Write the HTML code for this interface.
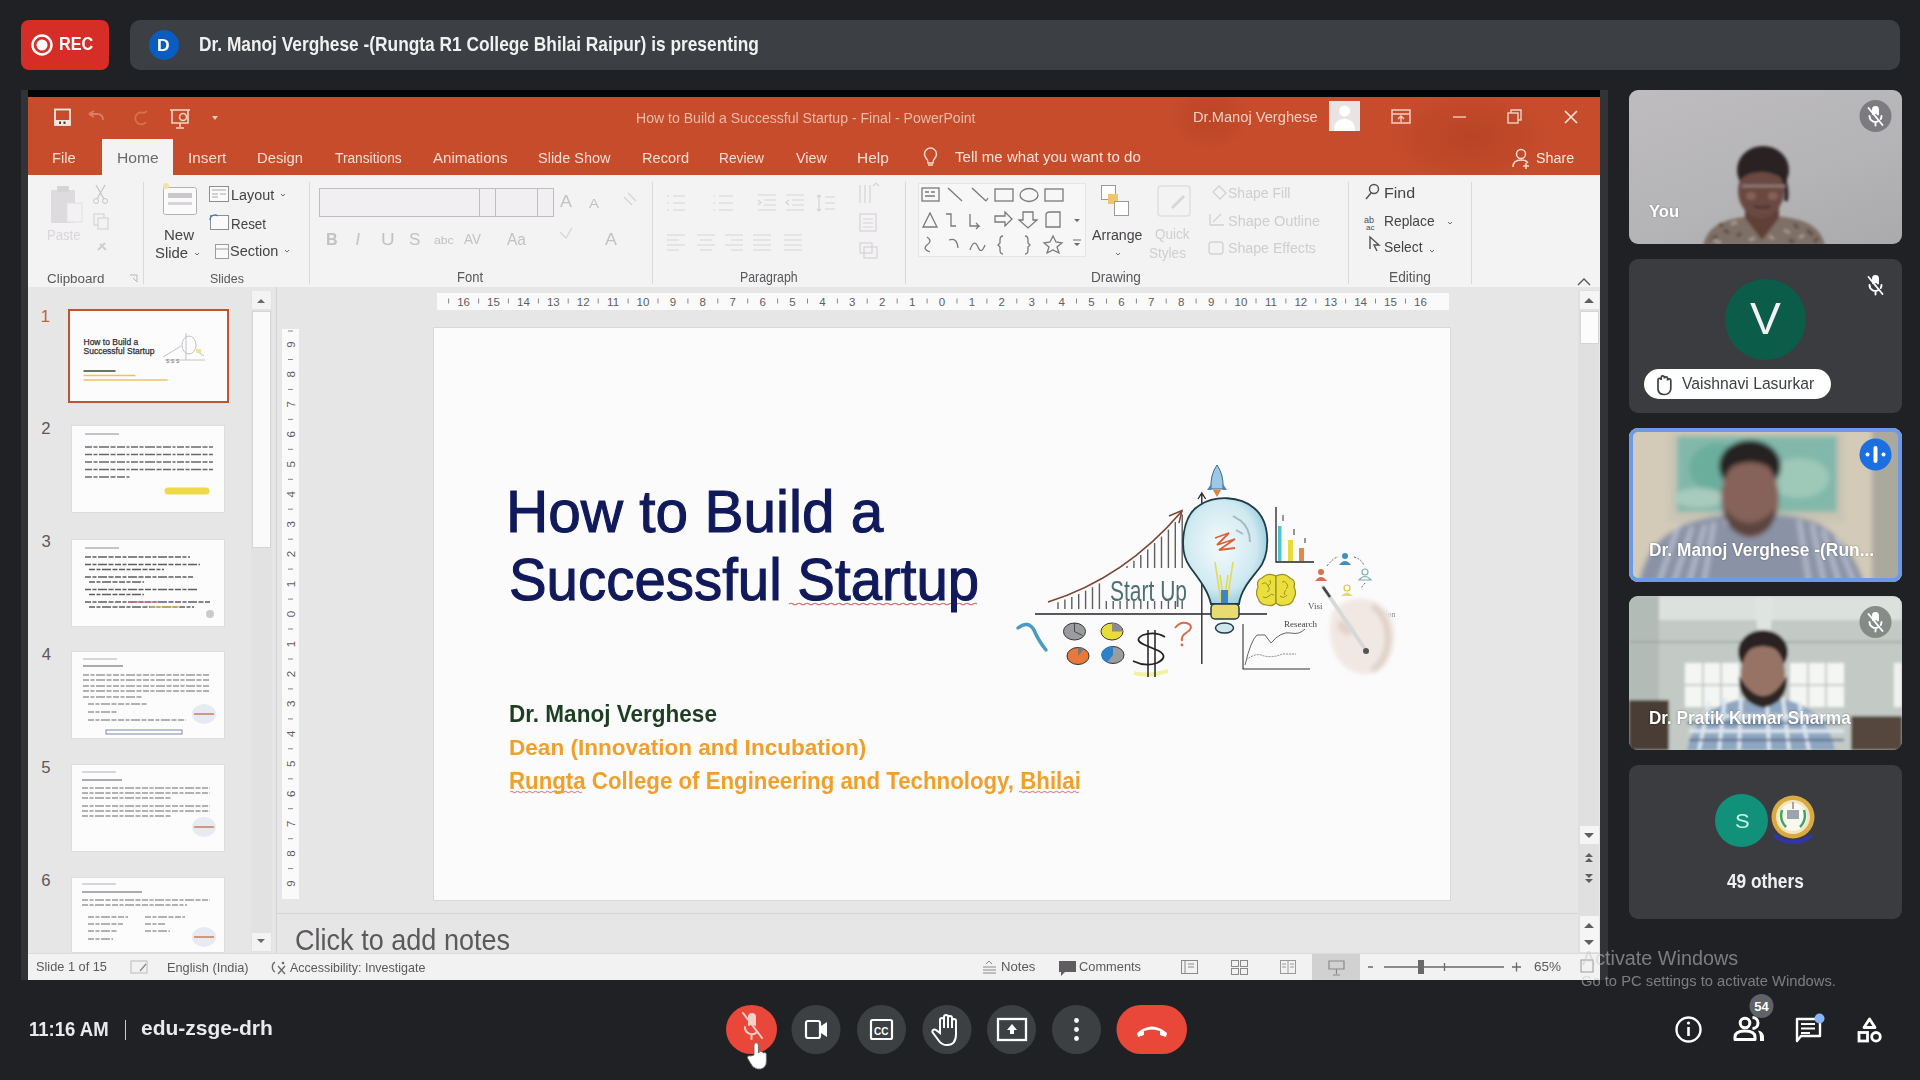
<!DOCTYPE html>
<html><head><meta charset="utf-8"><title>Meet</title>
<style>
*{box-sizing:border-box}
html,body{margin:0;padding:0}
body{width:1920px;height:1080px;overflow:hidden;background:#202124;position:relative;font-family:"Liberation Sans",sans-serif}
.a{position:absolute}
.t{position:absolute;white-space:nowrap;line-height:1;transform-origin:0 0}
svg{position:absolute;overflow:visible}
</style></head><body>
<div class="a" style="left:21px;top:20px;width:88px;height:50px;border-radius:8px;background:#d62d27"></div>
<svg style="left:0;top:0" width="1920" height="1080"><circle cx="42" cy="45" r="9.5" fill="none" stroke="#fff" stroke-width="2.4"/><circle cx="42" cy="45" r="5.5" fill="#fff"/></svg>
<div class="a" style="left:130px;top:20px;width:1770px;height:50px;border-radius:10px;background:#3c3f43"></div>
<div class="a" style="left:149px;top:30px;width:30px;height:30px;border-radius:50%;background:#0b5cc0"></div>
<div class="a" style="left:21px;top:90px;width:1587px;height:890px;background:#323337"></div>
<div class="a" style="left:28px;top:90px;width:1572px;height:7px;background:#050505"></div>
<div class="a" style="left:28px;top:97px;width:1572px;height:78px;background:#c64c2c"></div>
<div class="a" style="left:1140px;top:97px;width:460px;height:78px;background:radial-gradient(ellipse 120px 70px at 330px 40px, rgba(120,30,10,0.18), rgba(0,0,0,0) 70%), radial-gradient(ellipse 60px 50px at 70px 20px, rgba(120,30,10,0.15), rgba(0,0,0,0) 70%)"></div>
<div class="a" style="left:102px;top:139px;width:71px;height:37px;background:#f4f3f4"></div>
<div class="a" style="left:28px;top:175px;width:1572px;height:112px;background:#f4f3f4"></div>
<div class="a" style="left:28px;top:287px;width:1572px;height:666px;background:#e7e6e7"></div>
<div class="a" style="left:28px;top:953px;width:1572px;height:27px;background:#f3f2f3;border-top:1px solid #dcdbdc"></div>
<div class="a" style="left:1329px;top:101px;width:31px;height:30px;background:#e9e4e3"></div>
<svg style="left:0;top:0" width="1920" height="1080"><circle cx="1344.5" cy="111" r="5.5" fill="#fff"/><path d="M1334 131 Q1334 119 1344.5 119 Q1355 119 1355 131 Z" fill="#fff"/><rect x="55" y="109.5" width="15" height="15.5" fill="none" stroke="#f7e6df" stroke-width="1.8"/><rect x="55" y="120" width="15" height="5" fill="#f7e6df"/><rect x="59" y="121.5" width="2" height="2.5" fill="#5a3a30"/><rect x="63.5" y="121.5" width="2" height="2.5" fill="#5a3a30"/><path d="M89 114 l5 -3 M89 114 l5 3 M89 114 h8 q6 0 6 6" fill="none" stroke="#d9805f" stroke-width="1.8"/><path d="M146 122 a6 6 0 1 1 -2 -9 l3 -2" fill="none" stroke="#d4734f" stroke-width="1.8"/><path d="M170 110 h20 M172 110 v13 h16 v-13 M180 123 v4 M176 128 h8" fill="none" stroke="#f3d6c9" stroke-width="1.6"/><circle cx="183" cy="117" r="3.5" fill="none" stroke="#f3d6c9" stroke-width="1.5"/><path d="M212 116 h6 l-3 4 z" fill="#f0c7b6"/><rect x="1392" y="110" width="18" height="13" fill="none" stroke="#f4d0c2" stroke-width="1.5"/><path d="M1392 114 h18 M1401 116 v6 M1398 119 l3 -3 l3 3" fill="none" stroke="#f4d0c2" stroke-width="1.3"/><path d="M1453 117 h13" stroke="#f2c3b0" stroke-width="1.5"/><rect x="1508" y="113" width="10" height="10" fill="none" stroke="#f4d0c2" stroke-width="1.4"/><path d="M1511 113 v-3 h10 v10 h-3" fill="none" stroke="#f4d0c2" stroke-width="1.4"/><path d="M1565 111 l12 12 M1577 111 l-12 12" stroke="#f8e2d8" stroke-width="1.7"/><path d="M926 158 a6 6 0 1 1 9 0 q-2 2 -2 5 h-5 q0 -3 -2 -5 z M928 165 h5" fill="none" stroke="#f6dbcf" stroke-width="1.5"/><circle cx="1521" cy="154" r="4.5" fill="none" stroke="#f6dbcf" stroke-width="1.5"/><path d="M1513 167 q0 -7 8 -7 q5 0 7 3 M1526 163 v6 M1523 166 h6" fill="none" stroke="#f6dbcf" stroke-width="1.5"/></svg>
<svg style="left:0;top:0" width="1920" height="1080"><path d="M143.5 182 V284 M309.5 182 V284 M652.5 182 V284 M905.5 182 V284 M1348.5 182 V284 M1471.5 182 V284" stroke="#dad8da" stroke-width="1"/><rect x="51" y="190" width="24" height="33" rx="1" fill="#dddbdd"/><rect x="57" y="186" width="12" height="6" rx="1" fill="#d5d3d5"/><rect x="67" y="203" width="15" height="19" fill="#f3f1f3" stroke="#e2e0e2"/><path d="M96 185 l8 14 M105 185 l-8 14" stroke="#c8c6c8" stroke-width="1.3"/><circle cx="96" cy="201" r="2.5" fill="none" stroke="#c8c6c8"/><circle cx="105" cy="201" r="2.5" fill="none" stroke="#c8c6c8"/><rect x="94" y="214" width="10" height="11" fill="none" stroke="#cfcdcf"/><rect x="98" y="218" width="10" height="11" fill="#f4f3f4" stroke="#cfcdcf"/><path d="M98 250 l7 -7 M100 244 l6 6" stroke="#cfcdcf" stroke-width="2"/><path d="M130 275 h7 v7 M133 278 l4 4" fill="none" stroke="#b9b7b9" stroke-width="1"/><rect x="163.5" y="187.5" width="33" height="27" rx="2" fill="#fbfafb" stroke="#b3b1b3"/><rect x="168" y="193" width="24" height="5" fill="#c9c7c9"/><rect x="168" y="202" width="24" height="3" fill="#d7d5d7"/><circle cx="166" cy="186" r="3" fill="#f3e3a0"/><rect x="209.5" y="186.5" width="19" height="15" fill="#fbfafb" stroke="#8f8d8f"/><path d="M212 190 h14 M212 194 h6 M220 194 h6 M212 197 h6" stroke="#a9a7a9"/><rect x="210.5" y="215.5" width="18" height="14" fill="#fbfafb" stroke="#8f8d8f"/><path d="M210 220 a5 5 0 0 1 8 -4" fill="none" stroke="#4a79b8" stroke-width="1.3"/><rect x="215.5" y="244.5" width="13" height="14" fill="#fbfafb" stroke="#9d9b9d"/><path d="M215 249 h14" stroke="#9d9b9d"/><path d="M281 194 l2 2 l2 -2 M285 250 l2 2 l2 -2 M195 253 l2 2 l2 -2" fill="none" stroke="#6f6d6f" stroke-width="1"/><rect x="319.5" y="188.5" width="234" height="28" fill="#f1eff1" stroke="#bfbdbf"/><path d="M479.5 189 V216 M495.5 189 V216 M537.5 189 V216" stroke="#bfbdbf"/></svg>
<svg style="left:0;top:0" width="1920" height="1080"><g stroke="#d5d3d5" stroke-width="1.2" fill="none"><path d="M667 196 h2 M673 196 h12 M667 203 h2 M673 203 h12 M667 210 h2 M673 210 h12"/><path d="M713 196 h2 M719 196 h14 M713 203 h2 M719 203 h14 M713 210 h2 M719 210 h14"/><path d="M758 195 h18 M764 200 h12 M764 205 h12 M758 210 h18 M758 200 l3 2.5 l-3 2.5"/><path d="M786 195 h18 M792 200 h12 M792 205 h12 M786 210 h18 M789 200 l-3 2.5 l3 2.5"/><path d="M819 195 v16 M817 197 l2 -2 l2 2 M817 209 l2 2 l2 -2 M825 197 h10 M825 203 h10 M825 209 h10"/><path d="M860 185 v18 M865 185 v18 M870 185 v18 M873 186 l3 -3 l3 3"/><rect x="860" y="214" width="16" height="17"/><path d="M863 219 h10 M863 223 h10 M863 227 h10"/><rect x="860" y="243" width="12" height="10"/><rect x="864" y="247" width="13" height="11"/><path d="M667 235 h18 M667 240 h12 M667 245 h18 M667 250 h12"/><path d="M697 235 h18 M700 240 h12 M697 245 h18 M700 250 h12"/><path d="M725 235 h18 M731 240 h12 M725 245 h18 M731 250 h12"/><path d="M753 235 h18 M753 240 h18 M753 245 h18 M753 250 h18"/><path d="M784 235 h18 M784 240 h18 M784 245 h18 M784 250 h18"/><path d="M624 197 l8 8 M628 193 l8 8" /><path d="M560 232 l6 6 l6 -10" /></g><rect x="918.5" y="183.5" width="167" height="73" fill="#f8f7f8" stroke="#e6e4e6"/><g stroke="#7b797b" stroke-width="1.3" fill="none"><rect x="922" y="188" width="17" height="13"/><path d="M925 192 h4 M925 196 h10 M931 192 h4"/><path d="M948 188 l14 13 M972 188 l14 13 M986 201 l2 -3"/><rect x="995" y="189" width="18" height="12"/><ellipse cx="1029" cy="195" rx="9" ry="6.5"/><rect x="1045" y="189" width="18" height="12"/><path d="M923 227 l7 -14 l7 14 z M946 214 h5 v12 h5 M970 214 v12 h9 l-3 -3 M979 226 l-3 3"/><path d="M995 216 h10 v-4 l7 7 l-7 7 v-4 h-10 z M1023 212 h10 v8 h4 l-9 8 l-9 -8 h4 z M1046 227 v-12 q0 -3 4 -3 h10 v15 z"/><path d="M927 237 q6 4 0 8 q-5 4 3 7 M949 240 q8 -3 9 8 M970 250 q4 -12 8 -3 q3 8 7 -2 M1003 236 q-3 0 -3 4 v3 l-2 2 l2 2 v3 q0 4 3 4 M1025 236 q3 0 3 4 v3 l2 2 l-2 2 v3 q0 4 -3 4 M1053 236 l3 6 l6 1 l-5 4 l2 6 l-6 -3 l-6 3 l2 -6 l-5 -4 l6 -1 z"/></g><path d="M1074 219 h6 l-3 3 z M1074 243 h6 l-3 3 z" fill="#6d6b6d"/><path d="M1073 240 h8" stroke="#6d6b6d"/><rect x="1101.5" y="185.5" width="14" height="14" fill="#fff" stroke="#9b999b"/><rect x="1108" y="194" width="10" height="10" fill="#efc76a"/><rect x="1114.5" y="201.5" width="14" height="14" fill="#fff" stroke="#9b999b"/><path d="M1116 253 l2 2 l2 -2" fill="none" stroke="#6f6d6f"/><rect x="1158" y="186" width="32" height="30" rx="3" fill="none" stroke="#e0dee0" stroke-width="1.5"/><path d="M1172 208 l12 -12" stroke="#d8d6d8" stroke-width="3"/><g fill="none" stroke="#d3d1d3" stroke-width="1.3"><path d="M1213 192 l6 -6 l7 7 l-6 6 z"/><path d="M1210 225 h14 M1210 214 v11 M1213 222 l8 -8"/><rect x="1209" y="242" width="14" height="12" rx="3"/></g><g fill="none" stroke="#525052" stroke-width="1.4"><circle cx="1374" cy="189" r="4.5"/><path d="M1371 193 l-5 6"/><path d="M1370 249 l0 -12 l9 8 l-5 0 l3 6" /></g><text x="1364" y="223" font-family="Liberation Sans" font-size="9" fill="#525052">ab</text><text x="1366" y="230" font-family="Liberation Sans" font-size="8" fill="#525052">ac</text><path d="M1448 222 l2 2 l2 -2 M1430 250 l2 2 l2 -2" fill="none" stroke="#6f6d6f"/><path d="M1578 285 l6 -6 l6 6" fill="none" stroke="#555355" stroke-width="1.3"/></svg>
<div class="a" style="left:251px;top:291px;width:21px;height:661px;background:#e3e2e3"></div>
<div class="a" style="left:252px;top:291px;width:19px;height:18px;background:#f4f3f4"></div>
<div class="a" style="left:252px;top:311px;width:19px;height:237px;background:#fbfafb;border:1px solid #d6d5d6"></div>
<div class="a" style="left:252px;top:933px;width:19px;height:18px;background:#f4f3f4"></div>
<div class="a" style="left:276px;top:287px;width:1px;height:666px;background:#d4d3d4"></div>
<svg style="left:0;top:0" width="1920" height="1080"><path d="M257 303 l4 -4 l4 4 z M257 939 l4 4 l4 -4 z" fill="#6a686a"/></svg>
<div class="a" style="left:72px;top:426px;width:152px;height:86px;background:#fdfcfd;box-shadow:0 0 0 1px #dedcde"></div>
<div class="a" style="left:72px;top:540px;width:152px;height:86px;background:#fdfcfd;box-shadow:0 0 0 1px #dedcde"></div>
<div class="a" style="left:72px;top:652px;width:152px;height:86px;background:#fdfcfd;box-shadow:0 0 0 1px #dedcde"></div>
<div class="a" style="left:72px;top:765px;width:152px;height:86px;background:#fdfcfd;box-shadow:0 0 0 1px #dedcde"></div>
<div class="a" style="left:72px;top:878px;width:152px;height:74px;background:#fdfcfd;box-shadow:0 0 0 1px #dedcde"></div>
<div class="a" style="left:68px;top:309px;width:161px;height:94px;border:2.5px solid #bf5430;background:#fdfcfd"></div>
<svg style="left:0;top:0" width="1920" height="1080"><text x="83.5" y="345" font-family="Liberation Sans" font-size="8.5" fill="#2e2e32" stroke="#2e2e32" stroke-width="0.25">How to Build a</text><text x="83.5" y="354" font-family="Liberation Sans" font-size="8.5" fill="#2e2e32" stroke="#2e2e32" stroke-width="0.25">Successful Startup</text><path d="M83.5 371 h32" stroke="#1d3a1d" stroke-width="1.6" opacity="0.9"/><path d="M83.5 375.5 h52 M83.5 380 h84" stroke="#f0b040" stroke-width="1.3" opacity="0.8"/><g fill="none" stroke="#a8acb4" stroke-width="0.9" opacity="0.8"><path d="M163 357 l10 -6 l8 -5 M186 333 v27"/><ellipse cx="189" cy="345" rx="7" ry="9"/><path d="M198 352 l6 4 M165 360 h40"/></g><text x="166" y="363" font-family="Liberation Sans" font-size="6" fill="#8a8a8a">$ $ $</text><rect x="196" y="349" width="5" height="4" fill="#e8e080" opacity="0.8"/><path d="M85 434 h34" stroke="#b0b0b8" stroke-width="1.4"/><g stroke="#3a3a3a" stroke-width="1.6" stroke-dasharray="7 1.5 4 1.5 10 1.5 5 1.5 8 1.5 3 1.5" opacity="0.75"><path d="M85 447 h128 M85 454.5 h128 M85 462 h128 M85 469.5 h128 M85 477 h45"/></g><path d="M168 491 h38" stroke="#efd84a" stroke-width="7" stroke-linecap="round"/><path d="M85 548 h34" stroke="#b0b0b8" stroke-width="1.4"/><g stroke="#2a2a2a" stroke-width="1.4" stroke-dasharray="6 1.5 4 1.5 9 1.5 5 1.5" opacity="0.75"><path d="M85 557 h105 M85 564.5 h115 M89 569.5 h75 M85 577 h108 M89 582 h55 M85 589.5 h112 M89 594.5 h55 M85 602 h125 M89 607 h105"/></g><path d="M128 602 h30" stroke="#d86a8a" stroke-width="1.1"/><path d="M150 607 h30" stroke="#e8c050" stroke-width="1.1"/><circle cx="210" cy="614" r="4" fill="#c8ccd2"/><path d="M83 659 h34" stroke="#b0b0b8" stroke-width="1.2"/><path d="M83 666 h40" stroke="#5a5a5a" stroke-width="1.2"/><g stroke="#2a2a2a" stroke-width="1.2" stroke-dasharray="6 1.5 4 1.5 9 1.5 5 1.5" opacity="0.7"><path d="M83 675 h126 M83 680 h126 M83 686 h126 M83 691 h126 M83 697 h60 M88 704 h60 M88 712 h30 M88 720 h98"/></g><rect x="106" y="730" width="76" height="4" fill="none" stroke="#7a88a8" stroke-width="1"/><g opacity="0.8"><ellipse cx="204" cy="714" rx="12" ry="10" fill="#e2e6ee"/><path d="M194 714 h20" stroke="#c88060" stroke-width="2"/></g><path d="M82 772 h34" stroke="#b0b0b8" stroke-width="1.2"/><path d="M82 780 h40" stroke="#5a5a5a" stroke-width="1.2"/><g stroke="#2a2a2a" stroke-width="1.2" stroke-dasharray="6 1.5 4 1.5 9 1.5 5 1.5" opacity="0.7"><path d="M82 788 h128 M82 793 h128 M82 798 h90 M82 806 h128 M82 811 h128 M82 816 h90"/></g><g opacity="0.8"><ellipse cx="204" cy="827" rx="12" ry="10" fill="#e2e6ee"/><path d="M194 827 h20" stroke="#c88060" stroke-width="2"/></g><path d="M82 884 h34" stroke="#b0b0b8" stroke-width="1.2"/><path d="M82 892 h60" stroke="#5a5a5a" stroke-width="1.2"/><g stroke="#2a2a2a" stroke-width="1.2" stroke-dasharray="6 1.5 4 1.5 9 1.5 5 1.5" opacity="0.7"><path d="M82 900 h128 M82 905 h105 M88 917 h40 M145 917 h40 M88 924 h35 M145 924 h20 M88 931 h30 M145 931 h25 M88 939 h25"/></g><g opacity="0.8"><ellipse cx="204" cy="937" rx="12" ry="10" fill="#e2e6ee"/><path d="M194 937 h20" stroke="#c88060" stroke-width="2"/></g></svg>
<div class="a" style="left:437px;top:293px;width:1012px;height:17px;background:#fbfafb"></div>
<div class="a" style="left:282px;top:329px;width:17px;height:570px;background:#fbfafb"></div>
<svg style="left:0;top:0" width="1920" height="1080"><g font-family="Liberation Sans" font-size="11.5" fill="#5f5d5f" text-anchor="middle"><text x="463.6" y="305.6">16</text><path d="M478.6 298.5 v5" stroke="#8a888a" stroke-width="1"/><text x="493.5" y="305.6">15</text><path d="M508.4 298.5 v5" stroke="#8a888a" stroke-width="1"/><text x="523.4" y="305.6">14</text><path d="M538.4 298.5 v5" stroke="#8a888a" stroke-width="1"/><text x="553.3" y="305.6">13</text><path d="M568.2 298.5 v5" stroke="#8a888a" stroke-width="1"/><text x="583.2" y="305.6">12</text><path d="M598.2 298.5 v5" stroke="#8a888a" stroke-width="1"/><text x="613.1" y="305.6">11</text><path d="M628.1 298.5 v5" stroke="#8a888a" stroke-width="1"/><text x="643.0" y="305.6">10</text><path d="M658.0 298.5 v5" stroke="#8a888a" stroke-width="1"/><text x="672.9" y="305.6">9</text><path d="M687.9 298.5 v5" stroke="#8a888a" stroke-width="1"/><text x="702.8" y="305.6">8</text><path d="M717.8 298.5 v5" stroke="#8a888a" stroke-width="1"/><text x="732.7" y="305.6">7</text><path d="M747.7 298.5 v5" stroke="#8a888a" stroke-width="1"/><text x="762.6" y="305.6">6</text><path d="M777.6 298.5 v5" stroke="#8a888a" stroke-width="1"/><text x="792.5" y="305.6">5</text><path d="M807.5 298.5 v5" stroke="#8a888a" stroke-width="1"/><text x="822.4" y="305.6">4</text><path d="M837.4 298.5 v5" stroke="#8a888a" stroke-width="1"/><text x="852.3" y="305.6">3</text><path d="M867.2 298.5 v5" stroke="#8a888a" stroke-width="1"/><text x="882.2" y="305.6">2</text><path d="M897.2 298.5 v5" stroke="#8a888a" stroke-width="1"/><text x="912.1" y="305.6">1</text><path d="M927.1 298.5 v5" stroke="#8a888a" stroke-width="1"/><text x="942.0" y="305.6">0</text><path d="M957.0 298.5 v5" stroke="#8a888a" stroke-width="1"/><text x="971.9" y="305.6">1</text><path d="M986.9 298.5 v5" stroke="#8a888a" stroke-width="1"/><text x="1001.8" y="305.6">2</text><path d="M1016.8 298.5 v5" stroke="#8a888a" stroke-width="1"/><text x="1031.7" y="305.6">3</text><path d="M1046.7 298.5 v5" stroke="#8a888a" stroke-width="1"/><text x="1061.6" y="305.6">4</text><path d="M1076.5 298.5 v5" stroke="#8a888a" stroke-width="1"/><text x="1091.5" y="305.6">5</text><path d="M1106.5 298.5 v5" stroke="#8a888a" stroke-width="1"/><text x="1121.4" y="305.6">6</text><path d="M1136.4 298.5 v5" stroke="#8a888a" stroke-width="1"/><text x="1151.3" y="305.6">7</text><path d="M1166.2 298.5 v5" stroke="#8a888a" stroke-width="1"/><text x="1181.2" y="305.6">8</text><path d="M1196.1 298.5 v5" stroke="#8a888a" stroke-width="1"/><text x="1211.1" y="305.6">9</text><path d="M1226.0 298.5 v5" stroke="#8a888a" stroke-width="1"/><text x="1241.0" y="305.6">10</text><path d="M1256.0 298.5 v5" stroke="#8a888a" stroke-width="1"/><text x="1270.9" y="305.6">11</text><path d="M1285.9 298.5 v5" stroke="#8a888a" stroke-width="1"/><text x="1300.8" y="305.6">12</text><path d="M1315.8 298.5 v5" stroke="#8a888a" stroke-width="1"/><text x="1330.7" y="305.6">13</text><path d="M1345.6 298.5 v5" stroke="#8a888a" stroke-width="1"/><text x="1360.6" y="305.6">14</text><path d="M1375.5 298.5 v5" stroke="#8a888a" stroke-width="1"/><text x="1390.5" y="305.6">15</text><path d="M1405.5 298.5 v5" stroke="#8a888a" stroke-width="1"/><text x="1420.4" y="305.6">16</text><path d="M448.6 298.5 v5" stroke="#8a888a" stroke-width="1"/><text x="0" y="0" transform="translate(294.5 344.5) rotate(-90)">9</text><path d="M288 359.5 h5" stroke="#8a888a" stroke-width="1"/><text x="0" y="0" transform="translate(294.5 374.4) rotate(-90)">8</text><path d="M288 389.4 h5" stroke="#8a888a" stroke-width="1"/><text x="0" y="0" transform="translate(294.5 404.4) rotate(-90)">7</text><path d="M288 419.4 h5" stroke="#8a888a" stroke-width="1"/><text x="0" y="0" transform="translate(294.5 434.4) rotate(-90)">6</text><path d="M288 449.3 h5" stroke="#8a888a" stroke-width="1"/><text x="0" y="0" transform="translate(294.5 464.3) rotate(-90)">5</text><path d="M288 479.3 h5" stroke="#8a888a" stroke-width="1"/><text x="0" y="0" transform="translate(294.5 494.2) rotate(-90)">4</text><path d="M288 509.2 h5" stroke="#8a888a" stroke-width="1"/><text x="0" y="0" transform="translate(294.5 524.2) rotate(-90)">3</text><path d="M288 539.2 h5" stroke="#8a888a" stroke-width="1"/><text x="0" y="0" transform="translate(294.5 554.1) rotate(-90)">2</text><path d="M288 569.1 h5" stroke="#8a888a" stroke-width="1"/><text x="0" y="0" transform="translate(294.5 584.1) rotate(-90)">1</text><path d="M288 599.1 h5" stroke="#8a888a" stroke-width="1"/><text x="0" y="0" transform="translate(294.5 614.0) rotate(-90)">0</text><path d="M288 629.0 h5" stroke="#8a888a" stroke-width="1"/><text x="0" y="0" transform="translate(294.5 644.0) rotate(-90)">1</text><path d="M288 659.0 h5" stroke="#8a888a" stroke-width="1"/><text x="0" y="0" transform="translate(294.5 674.0) rotate(-90)">2</text><path d="M288 688.9 h5" stroke="#8a888a" stroke-width="1"/><text x="0" y="0" transform="translate(294.5 703.9) rotate(-90)">3</text><path d="M288 718.9 h5" stroke="#8a888a" stroke-width="1"/><text x="0" y="0" transform="translate(294.5 733.8) rotate(-90)">4</text><path d="M288 748.8 h5" stroke="#8a888a" stroke-width="1"/><text x="0" y="0" transform="translate(294.5 763.8) rotate(-90)">5</text><path d="M288 778.8 h5" stroke="#8a888a" stroke-width="1"/><text x="0" y="0" transform="translate(294.5 793.8) rotate(-90)">6</text><path d="M288 808.7 h5" stroke="#8a888a" stroke-width="1"/><text x="0" y="0" transform="translate(294.5 823.7) rotate(-90)">7</text><path d="M288 838.7 h5" stroke="#8a888a" stroke-width="1"/><text x="0" y="0" transform="translate(294.5 853.6) rotate(-90)">8</text><path d="M288 868.6 h5" stroke="#8a888a" stroke-width="1"/><text x="0" y="0" transform="translate(294.5 883.6) rotate(-90)">9</text><path d="M288 331 h5" stroke="#8a888a" stroke-width="1"/></g></svg>
<div class="a" style="left:434px;top:328px;width:1016px;height:572px;background:#fcfbfc;box-shadow:0 0 0 1px #d9d8d9"></div>
<div class="a" style="left:1578px;top:290px;width:21px;height:663px;background:#e1e0e1"></div>
<div class="a" style="left:1580px;top:291px;width:19px;height:18px;background:#f6f5f6"></div>
<div class="a" style="left:1580px;top:311px;width:19px;height:33px;background:#fdfcfd;border:1px solid #d6d5d6"></div>
<div class="a" style="left:1580px;top:826px;width:19px;height:18px;background:#f6f5f6"></div>
<div class="a" style="left:1580px;top:916px;width:19px;height:36px;background:#f6f5f6"></div>
<div class="a" style="left:277px;top:913px;width:1301px;height:1px;background:#d6d5d6"></div>
<svg style="left:0;top:0" width="1920" height="1080"><g fill="#5f5d5f"><path d="M1584 303 l5 -5 l5 5 z M1584 833 l5 5 l5 -5 z M1584 928 l5 -5 l5 5 z M1584 940 l5 5 l5 -5 z"/><path d="M1585 857 l4 -4 l4 4 z M1585 862 l4 -4 l4 4 z M1585 874 l4 4 l4 -4 z M1585 879 l4 4 l4 -4 z"/></g></svg>
<svg style="left:0;top:0" width="1920" height="1080"><path d="M789 604 q2 -1.5 4 0 t4 0 t4 0 t4 0 t4 0 t4 0 t4 0 t4 0 t4 0 t4 0 t4 0 t4 0 t4 0 t4 0 t4 0 t4 0 t4 0 t4 0 t4 0 t4 0 t4 0 t4 0 t4 0 t4 0 t4 0 t4 0 t4 0 t4 0 t4 0 t4 0 t4 0 t4 0 t4 0 t4 0 t4 0 t4 0 t4 0 t4 0 t4 0 t4 0 t4 0 t4 0 t4 0 t4 0 t4 0 t4 0 t4 0" fill="none" stroke="#d46a6a" stroke-width="1.2"/><path d="M510 792 q1.5 -1.5 3 0 t3 0 t3 0 t3 0 t3 0 t3 0 t3 0 t3 0 t3 0 t3 0 t3 0 t3 0 t3 0 t3 0 t3 0 t3 0 t3 0 t3 0 t3 0 t3 0 t3 0 t3 0 t3 0 t3 0" fill="none" stroke="#d46a6a" stroke-width="1"/><path d="M1019 792 q1.5 -1.5 3 0 t3 0 t3 0 t3 0 t3 0 t3 0 t3 0 t3 0 t3 0 t3 0 t3 0 t3 0 t3 0 t3 0 t3 0 t3 0 t3 0 t3 0 t3 0 t3 0" fill="none" stroke="#d46a6a" stroke-width="1"/></svg>
<svg style="left:0;top:0" width="1920" height="1080"><defs><filter id="bl" x="-50%" y="-50%" width="200%" height="200%"><feGaussianBlur stdDeviation="4"/></filter><filter id="bl1" x="-20%" y="-20%" width="140%" height="140%"><feGaussianBlur stdDeviation="0.6"/></filter><radialGradient id="bulbg" cx="0.45" cy="0.45" r="0.6"><stop offset="0" stop-color="#f4fbfd"/><stop offset="0.7" stop-color="#cfe9f1"/><stop offset="1" stop-color="#8fc9dc"/></radialGradient></defs><g filter="url(#bl1)"><g stroke="#3f4246" stroke-width="1.4" opacity="0.85"><path d="M1058.0 602.2 V609" /><path d="M1064.9 599.6 V609" /><path d="M1071.8 596.9 V609" /><path d="M1078.7 593.9 V609" /><path d="M1085.6 590.6 V609" /><path d="M1092.5 587.2 V609" /><path d="M1099.4 583.4 V609" /><path d="M1106.3 601 V609" /><path d="M1113.2 601 V609" /><path d="M1120.1 601 V609" /><path d="M1127.0 601 V609" /><path d="M1127.0 565.9 V568" /><path d="M1133.9 601 V609" /><path d="M1133.9 560.7 V568" /><path d="M1140.8 601 V609" /><path d="M1140.8 555.1 V568" /><path d="M1147.7 601 V609" /><path d="M1147.7 549.5 V568" /><path d="M1154.6 601 V609" /><path d="M1154.6 543.0 V568" /><path d="M1161.5 601 V609" /><path d="M1161.5 536.6 V568" /><path d="M1168.4 601 V609" /><path d="M1168.4 529.7 V568" /><path d="M1175.3 601 V609" /><path d="M1175.3 522.1 V568" /><path d="M1182.2 601 V609" /><path d="M1182.2 514.5 V568" /></g><path d="M1035 614 H1267" stroke="#1f2326" stroke-width="1.6"/><path d="M1201.8 664 V493 M1198 499 l3.8 -6 l3.8 6" fill="none" stroke="#2a2d30" stroke-width="1.4"/><path d="M1048 602 Q1125 578 1182 511" fill="none" stroke="#7a4636" stroke-width="1.7"/><path d="M1169 516 L1182 510.5 L1179 523" fill="none" stroke="#7a4636" stroke-width="1.5"/><text x="0" y="0" font-family="Liberation Sans" font-size="30" fill="#3a6066" transform="translate(1110 601) scale(0.7 1)" opacity="0.9">Start Up</text><path d="M1211 604 C1208 590 1198 578 1190 567 C1178 550 1182 515 1200 505 C1215 495 1240 496 1254 508 C1272 523 1270 556 1258 570 C1250 580 1241 590 1239 604 Z" fill="url(#bulbg)" stroke="#1f3c48" stroke-width="1.8"/><path d="M1240 520 q10 8 10 22 M1233 516 l8 5 M1236 530 l7 4" fill="none" stroke="#a8b8bf" stroke-width="2"/><path d="M1215 538 l14 -5 l-12 12 l18 -6 l-16 11 l16 -2" fill="none" stroke="#d7643a" stroke-width="1.8"/><path d="M1215 562 l6 40 M1233 562 l-6 40 M1220 575 l4 27 M1228 575 l-4 27" fill="none" stroke="#e6d850" stroke-width="1.6"/><rect x="1221" y="590" width="7" height="14" fill="#3d86c4"/><rect x="1211" y="604" width="28" height="15" rx="4" fill="#e8dc70" stroke="#1f3c48" stroke-width="1.5"/><ellipse cx="1224.5" cy="628" rx="9" ry="5" fill="#cfe6ee" stroke="#1f3c48" stroke-width="1.5"/><path d="M1217 465 q-7 10 -6 24 h12 q1 -14 -6 -24 z" fill="#9cc8e6" stroke="#3c6a8e" stroke-width="1"/><path d="M1211 484 l-4 6 h4 M1223 484 l4 6 h-4" fill="#4c86b8"/><path d="M1213 490 l4 7 l4 -7 z" fill="#e2843a"/><path d="M1276 507 V562 H1314" fill="none" stroke="#222" stroke-width="1.3"/><rect x="1278" y="526" width="3.5" height="35" fill="#4fc3d0"/><rect x="1288" y="540" width="5" height="21" fill="#e8dc3a"/><rect x="1299" y="548" width="5" height="13" fill="#e08a4a"/><path d="M1283 521 v-6 M1294 535 v-6 M1305 543 v-5" stroke="#333" stroke-width="1"/><path d="M1276 576 q-8 -4 -14 2 q-6 2 -4 9 q-3 6 0 11 q2 7 9 7 q5 2 9 -2 z" fill="#eadf3c" stroke="#9a9028" stroke-width="1.2"/><path d="M1276 576 q8 -4 14 2 q6 2 4 9 q3 6 0 11 q-2 7 -9 7 q-5 2 -9 -2 z" fill="#eadf3c" stroke="#9a9028" stroke-width="1.2"/><path d="M1262 584 q4 -3 6 2 q3 4 -1 6 M1280 596 q4 3 7 -1 M1263 597 q3 2 6 -1 q2 -3 5 -1 M1282 582 q3 -2 5 2 q2 3 -1 5 M1270 580 q2 4 -2 6 M1286 590 q-3 2 -1 5" fill="none" stroke="#9a9428" stroke-width="1"/><g stroke-width="0"><circle cx="1345" cy="556" r="3" fill="#3f8fc0"/><path d="M1339 565 q6 -8 12 0 z" fill="#3f8fc0"/><circle cx="1321" cy="572" r="3" fill="#d8704e"/><path d="M1315 581 q6 -8 12 0 z" fill="#d8704e"/><circle cx="1365" cy="572" r="3" fill="none" stroke="#7fb0b8" stroke-width="1.2"/><path d="M1359 580 q6 -7 12 0 z" fill="none" stroke="#7fb0b8" stroke-width="1.2"/><circle cx="1347" cy="588" r="3" fill="none" stroke="#d8c840" stroke-width="1.2"/><path d="M1341 596 q6 -7 12 0 z" fill="#e8dc60"/></g><path d="M1327 566 q6 -8 11 -9 M1354 557 q8 2 10 9 M1365 583 l-4 5" fill="none" stroke="#555" stroke-width="0.9" stroke-dasharray="2 1.5"/><path d="M1243 624 V669 H1310" fill="none" stroke="#333" stroke-width="1.1"/><path d="M1245 665 q6 -25 12 -30 h8 l6 8 q10 -12 20 -10 q8 2 14 -4" fill="none" stroke="#666" stroke-width="1"/><path d="M1246 660 q10 -8 18 -4 q10 2 18 -2 h14" fill="none" stroke="#777" stroke-width="0.9" stroke-dasharray="2 1"/><text x="1284" y="627" font-family="Liberation Serif" font-size="9" fill="#444">Research</text><text x="1308" y="609" font-family="Liberation Serif" font-size="9" fill="#555">Visi</text><text x="1383" y="617" font-family="Liberation Serif" font-size="8" fill="#888">tion</text><path d="M1018 628 q10 -8 16 2 q4 10 12 20" fill="none" stroke="#4a9cc0" stroke-width="3.5" stroke-linecap="round"/><ellipse cx="1074.5" cy="631.5" rx="11" ry="8.5" fill="#9a9ca0" stroke="#333" stroke-width="1"/><path d="M1074.5 631.5 v-8.5 M1074.5 631.5 l8 4" stroke="#333" stroke-width="0.8"/><ellipse cx="1112" cy="631.5" rx="11" ry="8.5" fill="#e8dc3a" stroke="#333" stroke-width="1"/><path d="M1112 631.5 v-8.5 a11 8.5 0 0 1 11 8.5 z" fill="#8a8c90"/><ellipse cx="1078" cy="656" rx="11" ry="8.5" fill="#e8783a" stroke="#333" stroke-width="1"/><path d="M1078 656 v-8.5 a11 8.5 0 0 1 6 1 z" fill="#777"/><ellipse cx="1113" cy="655" rx="11" ry="8.5" fill="#9a9ca0" stroke="#333" stroke-width="1"/><path d="M1113 655 v-8.5 a11 8.5 0 0 0 -6 16 z" fill="#2f80c8"/><path d="M1134 673 q14 4 34 -2" stroke="#eeee80" stroke-width="4" fill="none" opacity="0.7"/><path d="M1165 637 q-10 -6 -22 -2 q-10 5 2 10 l14 6 q10 6 -2 12 q-12 4 -24 -2" fill="none" stroke="#222" stroke-width="1.8"/><path d="M1148 630 V677 M1155 630 V677" stroke="#222" stroke-width="1.5"/><path d="M1175 628 q6 -8 14 -4 q5 4 -3 9 q-5 3 -4 8" fill="none" stroke="#d86a4a" stroke-width="2"/><circle cx="1182" cy="645" r="1.4" fill="#d86a4a"/></g><defs><filter id="bl2" x="-50%" y="-50%" width="200%" height="200%"><feGaussianBlur stdDeviation="2.2"/></filter></defs><g filter="url(#bl2)"><path d="M1332 612 q20 -22 48 -8 q18 12 14 40 q-4 26 -24 30 q-22 2 -34 -18 q-10 -20 -4 -44 z" fill="#f1e8e3"/><path d="M1372 606 q16 10 16 34 q-2 22 -16 30" fill="none" stroke="#ded0c8" stroke-width="6"/><ellipse cx="1345" cy="628" rx="9" ry="6" fill="#e2d4cc" transform="rotate(40 1345 628)"/></g><path d="M1323 587 L1367 652" stroke="#d8d8d8" stroke-width="4" stroke-linecap="round"/><path d="M1323 587 L1330 597" stroke="#444" stroke-width="2.5"/><circle cx="1366" cy="651" r="3" fill="#333" opacity="0.8"/></svg>
<div class="a" style="left:1629px;top:90px;width:273px;height:154px;border-radius:9px;overflow:hidden;background:linear-gradient(160deg,#bebcbf 0%,#b5b4b7 55%,#aaa9ac 100%)"><svg style="left:0;top:0" width="273" height="154"><defs><filter id="fb1" x="-30%" y="-30%" width="160%" height="160%"><feGaussianBlur stdDeviation="1.8"/></filter></defs><g filter="url(#fb1)"><path d="M74 156 q4 -20 26 -26 q14 -4 30 -4 h8 q18 0 32 4 q22 6 26 26 z" fill="#7e6f66"/><path d="M82 150 l6 -4 M95 140 l5 3 M178 140 l6 5 M165 134 l4 4 M185 152 l4 -4 M90 134 l4 2 M108 146 l4 -3 M160 150 l5 2" stroke="#5a4a40" stroke-width="3"/><path d="M84 150 l8 3 M102 134 l6 -2 M170 148 l5 -3 M155 140 l6 3 M120 150 l6 -2 M140 146 l5 3" stroke="#a89a8e" stroke-width="3"/><path d="M116 116 h34 v12 l-17 22 l-17 -22 z" fill="#5e4038"/><ellipse cx="134" cy="80" rx="26" ry="24" fill="#2a2224"/><ellipse cx="132" cy="101" rx="23" ry="27" fill="#6a4a42"/><path d="M110 92 q2 -18 22 -20 q22 2 26 22 q-6 -10 -24 -12 q-18 0 -24 10 z" fill="#2a2224"/><path d="M153 85 q6 10 4 26" stroke="#2a2224" stroke-width="4" fill="none"/><path d="M113 96 h44" stroke="#e2dada" stroke-width="1" opacity="0.8"/><ellipse cx="122" cy="106" rx="5" ry="4" fill="#84625a"/><ellipse cx="144" cy="106" rx="5" ry="4" fill="#84625a"/><path d="M125 116 q8 3 16 0" stroke="#4a3430" stroke-width="2.5" fill="none"/></g></svg></div>
<svg style="left:0;top:0" width="1920" height="1080"><circle cx="1875.5" cy="116" r="16" fill="#7c7b7f"/><g transform="translate(1875.5 116) scale(1.0)" fill="none" stroke="#fff" stroke-width="1.9" stroke-linecap="round"><path d="M-2.5 -2 v-4.5 a2.5 2.5 0 0 1 5 0 v5" fill="#fff"/><path d="M-6 0 a6 6 0 0 0 9.5 4.8 M6 0 a6 6 0 0 1 -0.8 3 M0 6 v3.5"/><path d="M-7 -8 L7 9"/></g></svg>
<div class="a" style="left:1629px;top:259px;width:273px;height:154px;border-radius:9px;background:#3b3c3f"></div>
<div class="a" style="left:1725px;top:279px;width:81px;height:81px;border-radius:50%;background:#0c5c4a"></div>
<svg style="left:0;top:0" width="1920" height="1080"><g transform="translate(1875.5 285) scale(1.0)" fill="none" stroke="#fff" stroke-width="1.9" stroke-linecap="round"><path d="M-2.5 -2 v-4.5 a2.5 2.5 0 0 1 5 0 v5" fill="#fff"/><path d="M-6 0 a6 6 0 0 0 9.5 4.8 M6 0 a6 6 0 0 1 -0.8 3 M0 6 v3.5"/><path d="M-7 -8 L7 9"/></g></svg>
<div class="a" style="left:1643.5px;top:368.5px;width:187px;height:30.5px;border-radius:16px;background:#fff"></div>
<svg style="left:0;top:0" width="1920" height="1080"><path d="M1658 384 v-4 a1.6 1.6 0 0 1 3.2 0 v-2.5 a1.6 1.6 0 0 1 3.2 0 v1 a1.6 1.6 0 0 1 3.2 0 v2 a1.6 1.6 0 0 1 3.2 0 v8 a6 6 0 0 1 -6 6 h-1 a6 6 0 0 1 -5.8 -5 z" fill="none" stroke="#3c4043" stroke-width="1.7"/></svg>
<div class="a" style="left:1629px;top:428px;width:273px;height:154px;border-radius:9px;overflow:hidden;background:#d6cdbc"><svg style="left:0;top:0" width="273" height="154"><defs><filter id="fb3" x="-30%" y="-30%" width="160%" height="160%"><feGaussianBlur stdDeviation="2.5"/></filter></defs><g filter="url(#fb3)"><rect x="0" y="0" width="273" height="154" fill="#d3cab8"/><rect x="40" y="4" width="175" height="90" fill="#c9c4b3"/><rect x="48" y="8" width="160" height="76" fill="#82b8aa"/><ellipse cx="90" cy="40" rx="30" ry="25" fill="#6cae9c"/><ellipse cx="170" cy="50" rx="30" ry="20" fill="#9ec8b8"/><ellipse cx="70" cy="70" rx="25" ry="10" fill="#a8cbbd"/><rect x="243" y="0" width="30" height="154" fill="#aba89e"/><path d="M10 154 q10 -50 60 -62 q30 -8 60 -6 q40 0 60 10 q30 16 45 58 z" fill="#8a93a6"/><path d="M30 154 l20 -58 M45 154 l18 -55 M60 154 l16 -57 M75 154 l10 -60 M180 154 l-10 -62 M195 154 l-12 -58 M210 154 l-16 -52 M225 154 l-18 -45" stroke="#c4cad8" stroke-width="3"/><path d="M95 95 l25 10 l25 -10 l-10 -10 h-30 z" fill="#e8e8ec"/><ellipse cx="121" cy="38" rx="31" ry="26" fill="#262322"/><ellipse cx="121" cy="70" rx="29" ry="40" fill="#86625a"/><path d="M95 80 q25 30 52 0 q0 25 -26 28 q-26 -3 -26 -28 z" fill="#5a4440"/><path d="M92 50 q4 -24 29 -26 q25 2 29 26 q-6 -14 -29 -16 q-23 2 -29 16 z" fill="#262322"/></g></svg></div>
<div class="a" style="left:1629px;top:428px;width:273px;height:154px;border-radius:9px;border:4.5px solid #6c9ae8"></div>
<svg style="left:0;top:0" width="1920" height="1080"><circle cx="1875.5" cy="454.5" r="16" fill="#1b6fe0"/><g fill="#fff"><circle cx="1867.5" cy="454.5" r="2"/><circle cx="1883.5" cy="454.5" r="2"/><rect x="1873.5" y="446" width="4" height="17" rx="2"/></g></svg>
<div class="a" style="left:1629px;top:596px;width:273px;height:154px;border-radius:9px;overflow:hidden;background:#bfc6c2"><svg style="left:0;top:0" width="273" height="154"><defs><filter id="fb4" x="-30%" y="-30%" width="160%" height="160%"><feGaussianBlur stdDeviation="1.8"/></filter></defs><g filter="url(#fb4)"><rect x="0" y="0" width="273" height="154" fill="#c3cac6"/><rect x="0" y="0" width="273" height="24" fill="#dce1dd"/><path d="M125 0 h20 l-4 40 h-12 z" fill="#dfe4e0"/><rect x="0" y="0" width="30" height="154" fill="#b3bbb6"/><path d="M0 46 H273" stroke="#a3aaa6" stroke-width="2"/><rect x="56" y="67" width="54" height="44" fill="#f4f6f4"/><rect x="161" y="67" width="54" height="44" fill="#f4f6f4"/><rect x="265" y="67" width="8" height="44" fill="#f0f2f0"/><path d="M74 67 v44 M92 67 v44 M56 89 h54 M179 67 v44 M197 67 v44 M161 89 h54" stroke="#b6bcb8" stroke-width="1.5"/><rect x="0" y="104" width="40" height="50" fill="#4a3e36"/><rect x="222" y="120" width="51" height="34" fill="#54463c"/><path d="M58 154 q8 -40 50 -50 h50 q40 10 48 50 z" fill="#8fa6c0"/><path d="M70 154 l10 -48 M90 154 l6 -52 M110 154 l2 -52 M140 154 l-2 -52 M160 154 l-6 -52 M180 154 l-10 -48 M62 120 h150 M60 135 h155" stroke="#dfe8f2" stroke-width="3.5"/><path d="M58 127 h155 M60 144 h155" stroke="#4a6488" stroke-width="2"/><ellipse cx="134" cy="56" rx="25" ry="22" fill="#2a2420"/><ellipse cx="134" cy="78" rx="22" ry="30" fill="#977365"/><path d="M110 80 q24 40 48 0 q2 26 -24 32 q-26 -6 -24 -32 z" fill="#2e2622"/><path d="M112 62 q2 -18 22 -20 q20 2 22 20 q-4 -10 -22 -12 q-18 2 -22 12 z" fill="#2a2420"/></g></svg></div>
<svg style="left:0;top:0" width="1920" height="1080"><circle cx="1875.5" cy="622" r="16" fill="#7d8380" opacity="0.9"/><g transform="translate(1875.5 622) scale(1.0)" fill="none" stroke="#fff" stroke-width="1.9" stroke-linecap="round"><path d="M-2.5 -2 v-4.5 a2.5 2.5 0 0 1 5 0 v5" fill="#fff"/><path d="M-6 0 a6 6 0 0 0 9.5 4.8 M6 0 a6 6 0 0 1 -0.8 3 M0 6 v3.5"/><path d="M-7 -8 L7 9"/></g></svg>
<div class="a" style="left:1629px;top:765px;width:273px;height:154px;border-radius:9px;background:#3b3c3f"></div>
<div class="a" style="left:1715px;top:794px;width:53px;height:53px;border-radius:50%;background:#12917a"></div>
<svg style="left:0;top:0" width="1920" height="1080"><path d="M1774 833 q19 14 38 0 v5 q-19 12 -38 0 z" fill="#3036a8"/><circle cx="1793" cy="817" r="21.5" fill="#d9a942"/><circle cx="1793" cy="817" r="17" fill="#f2e6c0"/><circle cx="1793" cy="817" r="14" fill="#fbf8ee"/><path d="M1782 810 q-3 10 4 17 M1804 810 q3 10 -4 17" fill="none" stroke="#3aa860" stroke-width="2.5"/><rect x="1787" y="810" width="12" height="9" fill="#9aa3ae"/><path d="M1793 802 v7" stroke="#555"/></svg>
<div class="a" style="left:124.5px;top:1020px;width:1.5px;height:20px;background:#c8cacd"></div>
<svg style="left:0;top:0" width="1920" height="1080"><ellipse cx="751.5" cy="1029.5" rx="25.5" ry="24.5" fill="#e8473a"/><circle cx="816" cy="1029.5" r="24.5" fill="#3c4043"/><circle cx="881.5" cy="1029.5" r="24.5" fill="#3c4043"/><circle cx="947" cy="1029.5" r="24.5" fill="#3c4043"/><circle cx="1011.5" cy="1029.5" r="24.5" fill="#3c4043"/><circle cx="1076.5" cy="1029.5" r="24.5" fill="#3c4043"/><rect x="1116.5" y="1005" width="70.5" height="49" rx="24.5" fill="#e8473a"/><g fill="none" stroke="#f6d0cb" stroke-width="2" stroke-linecap="round"><path d="M749 1025 v-8 a3 3 0 0 1 6 0 v8" fill="#f6d0cb"/><path d="M745 1027 a7 7 0 0 0 12 5 M751.5 1035 v4 M743 1013 l19 25"/></g><path transform="translate(4 6)" d="M750 1049 v-10 a2.2 2.2 0 0 1 4.4 0 v8 l1 -1 a2 2 0 0 1 3 0 l1 1 a2 2 0 0 1 3 1 v7 q0 7 -6 8 h-3 q-5 -1 -7 -6 l-3 -5 a2 2 0 0 1 3 -2 z" fill="#fff" stroke="#666" stroke-width="0.9"/><rect x="806" y="1021" width="14" height="17" rx="2" fill="none" stroke="#fff" stroke-width="2.2"/><path d="M821 1026 l6 -4 v15 l-6 -4 z" fill="#fff"/><rect x="871" y="1020" width="21" height="19" rx="1.5" fill="none" stroke="#fff" stroke-width="2.2"/><text x="874" y="1035" font-family="Liberation Sans" font-weight="700" font-size="10" fill="#fff">CC</text><path d="M940 1033 v-13 a2 2 0 0 1 4 0 v8 v-11 a2 2 0 0 1 4 0 v11 v-10 a2 2 0 0 1 4 0 v10 v-7 a2 2 0 0 1 4 0 v13 q0 11 -9 11 q-5 0 -8 -4 l-6 -8 a2 2 0 0 1 3 -3 z" fill="none" stroke="#fff" stroke-width="2"/><rect x="998" y="1019" width="28" height="21" fill="none" stroke="#fff" stroke-width="2.3"/><path d="M1012 1024 l-5 6 h3 v4 h4 v-4 h3 z" fill="#fff"/><circle cx="1076.5" cy="1020.5" r="2.4" fill="#fff"/><circle cx="1076.5" cy="1029.5" r="2.4" fill="#fff"/><circle cx="1076.5" cy="1038.5" r="2.4" fill="#fff"/><path d="M1137 1033 q15 -13 30 0 l-1 4 l-6 -2 v-4 q-8 -3 -16 0 v4 l-6 2 z" fill="#fff"/><circle cx="1688.5" cy="1029.5" r="12" fill="none" stroke="#fff" stroke-width="2.4"/><rect x="1687.2" y="1027" width="2.6" height="9" fill="#fff"/><circle cx="1688.5" cy="1023" r="1.6" fill="#fff"/><circle cx="1745" cy="1023" r="4.8" fill="none" stroke="#fff" stroke-width="3"/><path d="M1735 1039.5 v-2.5 q0 -6 10 -6 q10 0 10 6 v2.5 z" fill="none" stroke="#fff" stroke-width="3" stroke-linejoin="round"/><path d="M1752.5 1017.5 a5.5 5.5 0 0 1 0 11" fill="none" stroke="#fff" stroke-width="3"/><path d="M1758 1030.5 q6 1 6 7 v3.5 h-4 v-3.5 q0 -4 -2 -7 z" fill="#fff"/><circle cx="1761.5" cy="1006" r="12" fill="#5f6368"/><text x="1761.5" y="1011" text-anchor="middle" font-family="Liberation Sans" font-weight="700" font-size="13" fill="#fff">54</text><path d="M1797 1041 v-22 h23 v17 h-19 z" fill="none" stroke="#fff" stroke-width="2.4" stroke-linejoin="round"/><path d="M1801 1024 h14 M1801 1028.5 h14 M1801 1033 h9" stroke="#fff" stroke-width="2"/><circle cx="1819.5" cy="1018.5" r="5" fill="#8ab4f8"/><path d="M1869.5 1019 l5.5 8.5 h-11 z" fill="none" stroke="#fff" stroke-width="2.8" stroke-linejoin="round"/><rect x="1859" y="1032.5" width="8.5" height="8.5" fill="none" stroke="#fff" stroke-width="2.8"/><circle cx="1876" cy="1036.8" r="4.3" fill="none" stroke="#fff" stroke-width="2.8"/></svg>
<svg style="left:0;top:0" width="1920" height="1080"><rect x="131" y="961" width="16" height="12" fill="none" stroke="#bcbabc"/><path d="M140 971 l6 -7" stroke="#8a888a" stroke-width="1.3"/><path d="M275 962 a6 6 0 0 0 0 10 M278 966 l7 8 M285 966 l-7 8" fill="none" stroke="#6a686a" stroke-width="1.3"/><circle cx="283" cy="963" r="1.3" fill="#6a686a"/><path d="M983 967 h13 M983 970 h13 M983 973 h13 M986 964 l3 -3 l3 3" fill="none" stroke="#8a888a" stroke-width="1"/><path d="M1059 961 h17 v11 h-11 l-4 4 v-4 h-2 z" fill="#5f5d5f"/><rect x="1181.5" y="960.5" width="16" height="13" fill="none" stroke="#8a888a"/><path d="M1185 961 v12 M1188 964 h6 M1188 967 h6" stroke="#8a888a"/><rect x="1231.5" y="960.5" width="7" height="6" fill="none" stroke="#8a888a"/><rect x="1240.5" y="960.5" width="7" height="6" fill="none" stroke="#8a888a"/><rect x="1231.5" y="968.5" width="7" height="6" fill="none" stroke="#8a888a"/><rect x="1240.5" y="968.5" width="7" height="6" fill="none" stroke="#8a888a"/><rect x="1280.5" y="960.5" width="15" height="13" fill="none" stroke="#9a989a"/><path d="M1288 961 v12 M1282 964 h4 M1282 967 h4 M1290 964 h4 M1290 967 h4" stroke="#9a989a"/><rect x="1312" y="954" width="48" height="26" fill="#d2d1d2"/><path d="M1329 961 h15 v8 h-15 z M1336.5 969 v5 M1333 975 h7" fill="none" stroke="#8a888a" stroke-width="1.2"/><path d="M1368 967 h5 M1384 967 H1504 M1512 967 h9 M1516.5 962.5 v9" stroke="#6a686a" stroke-width="1.3"/><rect x="1418" y="960" width="6" height="14" fill="#6a686a"/><path d="M1444.5 963 v8" stroke="#6a686a" stroke-width="1.3"/><rect x="1581" y="960" width="12" height="12" fill="none" stroke="#9a989a"/></svg>
<div class="t" style="left:59.02px;top:34.79px;font-size:18.57px;color:#fff;font-weight:700;font-family:'Liberation Sans', sans-serif;transform:scaleX(0.8757);"><span>REC</span></div>
<div class="t" style="left:157.45px;top:36.50px;font-size:17.14px;color:#fff;font-weight:700;font-family:'Liberation Sans', sans-serif;transform:scaleX(1.0185);"><span>D</span></div>
<div class="t" style="left:198.96px;top:35.18px;font-size:19.29px;color:#f1f1f1;font-weight:700;font-family:'Liberation Sans', sans-serif;transform:scaleX(0.8980);"><span>Dr. Manoj Verghese -(Rungta R1 College Bhilai Raipur) is presenting</span></div>
<div class="t" style="left:635.87px;top:109.63px;font-size:15.22px;color:#ecbaa5;font-weight:400;font-family:'Liberation Sans', sans-serif;transform:scaleX(0.9248);"><span>How to Build a Successful Startup  -  Final  -  PowerPoint</span></div>
<div class="t" style="left:1192.83px;top:108.63px;font-size:15.22px;color:#f3cfc0;font-weight:400;font-family:'Liberation Sans', sans-serif;transform:scaleX(0.9635);"><span>Dr.Manoj Verghese</span></div>
<div class="t" style="left:51.82px;top:150.13px;font-size:15.22px;color:#f7ddd2;font-weight:400;font-family:'Liberation Sans', sans-serif;transform:scaleX(0.9669);"><span>File</span></div>
<div class="t" style="left:116.75px;top:150.13px;font-size:15.22px;color:#6d6a6b;font-weight:400;font-family:'Liberation Sans', sans-serif;transform:scaleX(1.0303);"><span>Home</span></div>
<div class="t" style="left:187.62px;top:150.13px;font-size:15.22px;color:#f7ddd2;font-weight:400;font-family:'Liberation Sans', sans-serif;transform:scaleX(1.0076);"><span>Insert</span></div>
<div class="t" style="left:256.82px;top:150.13px;font-size:15.22px;color:#f7ddd2;font-weight:400;font-family:'Liberation Sans', sans-serif;transform:scaleX(0.9714);"><span>Design</span></div>
<div class="t" style="left:334.73px;top:150.13px;font-size:15.22px;color:#f7ddd2;font-weight:400;font-family:'Liberation Sans', sans-serif;transform:scaleX(0.9029);"><span>Transitions</span></div>
<div class="t" style="left:433.00px;top:150.13px;font-size:15.22px;color:#f7ddd2;font-weight:400;font-family:'Liberation Sans', sans-serif;transform:scaleX(0.9890);"><span>Animations</span></div>
<div class="t" style="left:538.42px;top:150.13px;font-size:15.22px;color:#f7ddd2;font-weight:400;font-family:'Liberation Sans', sans-serif;transform:scaleX(0.9519);"><span>Slide Show</span></div>
<div class="t" style="left:641.83px;top:150.13px;font-size:15.22px;color:#f7ddd2;font-weight:400;font-family:'Liberation Sans', sans-serif;transform:scaleX(0.9578);"><span>Record</span></div>
<div class="t" style="left:718.90px;top:150.13px;font-size:15.22px;color:#f7ddd2;font-weight:400;font-family:'Liberation Sans', sans-serif;transform:scaleX(0.9017);"><span>Review</span></div>
<div class="t" style="left:796.00px;top:150.13px;font-size:15.22px;color:#f7ddd2;font-weight:400;font-family:'Liberation Sans', sans-serif;transform:scaleX(0.9443);"><span>View</span></div>
<div class="t" style="left:856.76px;top:150.13px;font-size:15.22px;color:#f7ddd2;font-weight:400;font-family:'Liberation Sans', sans-serif;transform:scaleX(1.0159);"><span>Help</span></div>
<div class="t" style="left:954.70px;top:149.13px;font-size:15.22px;color:#f8e1d7;font-weight:400;font-family:'Liberation Sans', sans-serif;transform:scaleX(0.9897);"><span>Tell me what you want to do</span></div>
<div class="t" style="left:1536.43px;top:150.13px;font-size:15.22px;color:#fbe9e1;font-weight:400;font-family:'Liberation Sans', sans-serif;transform:scaleX(0.9379);"><span>Share</span></div>
<div class="t" style="left:230.85px;top:186.63px;font-size:15.22px;color:#454345;font-weight:400;font-family:'Liberation Sans', sans-serif;transform:scaleX(0.9437);"><span>Layout</span></div>
<div class="t" style="left:230.93px;top:215.81px;font-size:15.00px;color:#454345;font-weight:400;font-family:'Liberation Sans', sans-serif;transform:scaleX(0.8943);"><span>Reset</span></div>
<div class="t" style="left:230.42px;top:243.99px;font-size:14.79px;color:#454345;font-weight:400;font-family:'Liberation Sans', sans-serif;transform:scaleX(0.9811);"><span>Section</span></div>
<div class="t" style="left:163.80px;top:226.63px;font-size:15.22px;color:#454345;font-weight:400;font-family:'Liberation Sans', sans-serif;transform:scaleX(0.9883);"><span>New</span></div>
<div class="t" style="left:155.40px;top:246.49px;font-size:14.79px;color:#454345;font-weight:400;font-family:'Liberation Sans', sans-serif;transform:scaleX(1.0076);"><span>Slide</span></div>
<div class="t" style="left:46.95px;top:228.85px;font-size:13.77px;color:#d8d6d8;font-weight:400;font-family:'Liberation Sans', sans-serif;transform:scaleX(0.9522);"><span>Paste</span></div>
<div class="t" style="left:47.33px;top:271.52px;font-size:13.57px;color:#59575a;font-weight:400;font-family:'Liberation Sans', sans-serif;transform:scaleX(0.9885);"><span>Clipboard</span></div>
<div class="t" style="left:209.50px;top:271.68px;font-size:13.38px;color:#59575a;font-weight:400;font-family:'Liberation Sans', sans-serif;transform:scaleX(0.9294);"><span>Slides</span></div>
<div class="t" style="left:456.96px;top:271.35px;font-size:13.77px;color:#59575a;font-weight:400;font-family:'Liberation Sans', sans-serif;transform:scaleX(0.9442);"><span>Font</span></div>
<div class="t" style="left:740.01px;top:271.35px;font-size:13.77px;color:#59575a;font-weight:400;font-family:'Liberation Sans', sans-serif;transform:scaleX(0.8971);"><span>Paragraph</span></div>
<div class="t" style="left:1090.91px;top:271.35px;font-size:13.77px;color:#59575a;font-weight:400;font-family:'Liberation Sans', sans-serif;transform:scaleX(0.9871);"><span>Drawing</span></div>
<div class="t" style="left:1388.90px;top:271.35px;font-size:13.77px;color:#59575a;font-weight:400;font-family:'Liberation Sans', sans-serif;transform:scaleX(0.9945);"><span>Editing</span></div>
<div class="t" style="left:326.03px;top:231.71px;font-size:15.71px;color:#c3c1c3;font-weight:700;font-family:'Liberation Sans', sans-serif;transform:scaleX(1.0264);"><span>B</span></div>
<div class="t" style="left:355.57px;top:231.51px;font-size:15.94px;color:#c3c1c3;font-weight:400;font-family:'Liberation Sans', sans-serif;font-style:italic;"><span>I</span></div>
<div class="t" style="left:380.67px;top:231.51px;font-size:15.94px;color:#c3c1c3;font-weight:400;font-family:'Liberation Sans', sans-serif;transform:scaleX(1.1897);"><span>U</span></div>
<div class="t" style="left:409.32px;top:231.51px;font-size:15.94px;color:#c3c1c3;font-weight:400;font-family:'Liberation Sans', sans-serif;transform:scaleX(1.0632);"><span>S</span></div>
<div class="t" style="left:433.51px;top:235.19px;font-size:11.59px;color:#c3c1c3;font-weight:400;font-family:'Liberation Sans', sans-serif;transform:scaleX(1.0557);"><span>abc</span></div>
<div class="t" style="left:464.00px;top:231.74px;font-size:14.49px;color:#c3c1c3;font-weight:400;font-family:'Liberation Sans', sans-serif;transform:scaleX(0.9289);"><span>AV</span></div>
<div class="t" style="left:507.00px;top:231.51px;font-size:15.94px;color:#c3c1c3;font-weight:400;font-family:'Liberation Sans', sans-serif;transform:scaleX(0.9713);"><span>Aa</span></div>
<div class="t" style="left:605.00px;top:231.51px;font-size:15.94px;color:#c3c1c3;font-weight:400;font-family:'Liberation Sans', sans-serif;transform:scaleX(1.1235);"><span>A</span></div>
<div class="t" style="left:560.00px;top:193.29px;font-size:17.39px;color:#c3c1c3;font-weight:400;font-family:'Liberation Sans', sans-serif;transform:scaleX(1.0299);"><span>A</span></div>
<div class="t" style="left:589.00px;top:196.97px;font-size:13.04px;color:#c3c1c3;font-weight:400;font-family:'Liberation Sans', sans-serif;transform:scaleX(1.1443);"><span>A</span></div>
<div class="t" style="left:1092.00px;top:226.63px;font-size:15.22px;color:#454345;font-weight:400;font-family:'Liberation Sans', sans-serif;transform:scaleX(0.9331);"><span>Arrange</span></div>
<div class="t" style="left:1155.46px;top:226.91px;font-size:14.29px;color:#d0ced0;font-weight:400;font-family:'Liberation Sans', sans-serif;transform:scaleX(0.9421);"><span>Quick</span></div>
<div class="t" style="left:1149.46px;top:246.08px;font-size:14.08px;color:#d0ced0;font-weight:400;font-family:'Liberation Sans', sans-serif;transform:scaleX(0.9634);"><span>Styles</span></div>
<div class="t" style="left:1228.44px;top:186.08px;font-size:14.08px;color:#cfcdcf;font-weight:400;font-family:'Liberation Sans', sans-serif;transform:scaleX(0.9969);"><span>Shape Fill</span></div>
<div class="t" style="left:1228.42px;top:214.08px;font-size:14.08px;color:#cfcdcf;font-weight:400;font-family:'Liberation Sans', sans-serif;transform:scaleX(1.0318);"><span>Shape Outline</span></div>
<div class="t" style="left:1228.43px;top:241.08px;font-size:14.08px;color:#cfcdcf;font-weight:400;font-family:'Liberation Sans', sans-serif;transform:scaleX(1.0064);"><span>Shape Effects</span></div>
<div class="t" style="left:1383.72px;top:185.13px;font-size:15.22px;color:#454345;font-weight:400;font-family:'Liberation Sans', sans-serif;transform:scaleX(1.0534);"><span>Find</span></div>
<div class="t" style="left:1383.90px;top:212.81px;font-size:15.00px;color:#454345;font-weight:400;font-family:'Liberation Sans', sans-serif;transform:scaleX(0.9195);"><span>Replace</span></div>
<div class="t" style="left:1384.45px;top:240.49px;font-size:14.79px;color:#454345;font-weight:400;font-family:'Liberation Sans', sans-serif;transform:scaleX(0.9373);"><span>Select</span></div>
<div class="t" style="left:40.83px;top:308.90px;font-size:16.67px;color:#c85a3a;font-weight:400;font-family:'Liberation Sans', sans-serif;"><span>1</span></div>
<div class="t" style="left:41.17px;top:420.90px;font-size:16.67px;color:#5a585a;font-weight:400;font-family:'Liberation Sans', sans-serif;"><span>2</span></div>
<div class="t" style="left:41.50px;top:533.90px;font-size:16.67px;color:#5a585a;font-weight:400;font-family:'Liberation Sans', sans-serif;"><span>3</span></div>
<div class="t" style="left:41.67px;top:646.90px;font-size:16.67px;color:#5a585a;font-weight:400;font-family:'Liberation Sans', sans-serif;"><span>4</span></div>
<div class="t" style="left:41.33px;top:759.90px;font-size:16.67px;color:#5a585a;font-weight:400;font-family:'Liberation Sans', sans-serif;"><span>5</span></div>
<div class="t" style="left:41.17px;top:872.90px;font-size:16.67px;color:#5a585a;font-weight:400;font-family:'Liberation Sans', sans-serif;"><span>6</span></div>
<div class="t" style="left:294.65px;top:926.33px;font-size:28.57px;color:#5b595b;font-weight:400;font-family:'Liberation Sans', sans-serif;transform:scaleX(0.9474);"><span>Click to add notes</span></div>
<div class="t" style="left:506.32px;top:481.73px;font-size:59.42px;color:#10195a;font-weight:400;font-family:'Liberation Sans', sans-serif;transform:scaleX(0.9852);-webkit-text-stroke:1.1px #10195a;"><span>How to Build a</span></div>
<div class="t" style="left:508.74px;top:550.45px;font-size:59.15px;color:#10195a;font-weight:400;font-family:'Liberation Sans', sans-serif;transform:scaleX(0.9536);-webkit-text-stroke:1.1px #10195a;"><span>Successful Startup</span></div>
<div class="t" style="left:509.15px;top:702.88px;font-size:23.19px;color:#1c3f22;font-weight:700;font-family:'Liberation Sans', sans-serif;transform:scaleX(0.9720);"><span>Dr. Manoj Verghese</span></div>
<div class="t" style="left:509.15px;top:736.50px;font-size:22.46px;color:#f0a02a;font-weight:700;font-family:'Liberation Sans', sans-serif;transform:scaleX(1.0047);"><span>Dean (Innovation and Incubation)</span></div>
<div class="t" style="left:509.16px;top:770.38px;font-size:23.19px;color:#f0a02a;font-weight:700;font-family:'Liberation Sans', sans-serif;transform:scaleX(0.9601);"><span>Rungta College of Engineering and Technology, Bhilai</span></div>
<div class="t" style="left:1649.33px;top:202.79px;font-size:17.39px;color:#fff;font-weight:700;font-family:'Liberation Sans', sans-serif;transform:scaleX(0.9563);text-shadow:0 0 2px rgba(0,0,0,0.35);"><span>You</span></div>
<div class="t" style="left:1750.00px;top:296.99px;font-size:44.93px;color:#f2f2f2;font-weight:400;font-family:'Liberation Sans', sans-serif;transform:scaleX(1.0299);"><span>V</span></div>
<div class="t" style="left:1682.00px;top:375.51px;font-size:15.94px;color:#3c4043;font-weight:400;font-family:'Liberation Sans', sans-serif;transform:scaleX(0.9837);"><span>Vaishnavi Lasurkar</span></div>
<div class="t" style="left:1648.96px;top:540.67px;font-size:18.12px;color:#fff;font-weight:700;font-family:'Liberation Sans', sans-serif;transform:scaleX(0.9603);text-shadow:0 0 2px rgba(0,0,0,0.4);"><span>Dr. Manoj Verghese -(Run...</span></div>
<div class="t" style="left:1648.97px;top:708.56px;font-size:18.84px;color:#fff;font-weight:700;font-family:'Liberation Sans', sans-serif;transform:scaleX(0.9090);text-shadow:0 0 2px rgba(0,0,0,0.5);"><span>Dr. Pratik Kumar Sharma</span></div>
<div class="t" style="left:1734.62px;top:811.22px;font-size:20.42px;color:#c9f1ea;font-weight:400;font-family:'Liberation Sans', sans-serif;transform:scaleX(1.0789);"><span>S</span></div>
<div class="t" style="left:1727.33px;top:870.83px;font-size:20.29px;color:#f1f1f1;font-weight:700;font-family:'Liberation Sans', sans-serif;transform:scaleX(0.8513);"><span>49 others</span></div>
<div class="t" style="left:29.39px;top:1018.79px;font-size:20.58px;color:#e8eaed;font-weight:700;font-family:'Liberation Sans', sans-serif;transform:scaleX(0.8997);"><span>11:16 AM</span></div>
<div class="t" style="left:140.87px;top:1019.20px;font-size:19.86px;color:#e8eaed;font-weight:700;font-family:'Liberation Sans', sans-serif;transform:scaleX(1.0578);"><span>edu-zsge-drh</span></div>
<div class="t" style="left:36.49px;top:961.28px;font-size:12.68px;color:#5b595b;font-weight:400;font-family:'Liberation Sans', sans-serif;transform:scaleX(1.0071);"><span>Slide 1 of 15</span></div>
<div class="t" style="left:166.98px;top:960.97px;font-size:13.04px;color:#5b595b;font-weight:400;font-family:'Liberation Sans', sans-serif;transform:scaleX(0.9799);"><span>English (India)</span></div>
<div class="t" style="left:289.50px;top:960.97px;font-size:13.04px;color:#5b595b;font-weight:400;font-family:'Liberation Sans', sans-serif;transform:scaleX(0.9582);"><span>Accessibility: Investigate</span></div>
<div class="t" style="left:1000.94px;top:960.47px;font-size:13.04px;color:#5b595b;font-weight:400;font-family:'Liberation Sans', sans-serif;transform:scaleX(1.0111);"><span>Notes</span></div>
<div class="t" style="left:1079.36px;top:960.62px;font-size:12.86px;color:#5b595b;font-weight:400;font-family:'Liberation Sans', sans-serif;transform:scaleX(0.9979);"><span>Comments</span></div>
<div class="t" style="left:1534.32px;top:960.62px;font-size:12.86px;color:#5b595b;font-weight:400;font-family:'Liberation Sans', sans-serif;transform:scaleX(1.0520);"><span>65%</span></div>
<div class="t" style="left:1581.50px;top:948.95px;font-size:19.57px;color:rgba(200,200,200,0.55);font-weight:400;font-family:'Liberation Sans', sans-serif;transform:scaleX(1.0110);"><span>Activate Windows</span></div>
<div class="t" style="left:1581.26px;top:972.75px;font-size:15.43px;color:rgba(200,200,200,0.55);font-weight:400;font-family:'Liberation Sans', sans-serif;transform:scaleX(0.9563);"><span>Go to PC settings to activate Windows.</span></div>
</body></html>
